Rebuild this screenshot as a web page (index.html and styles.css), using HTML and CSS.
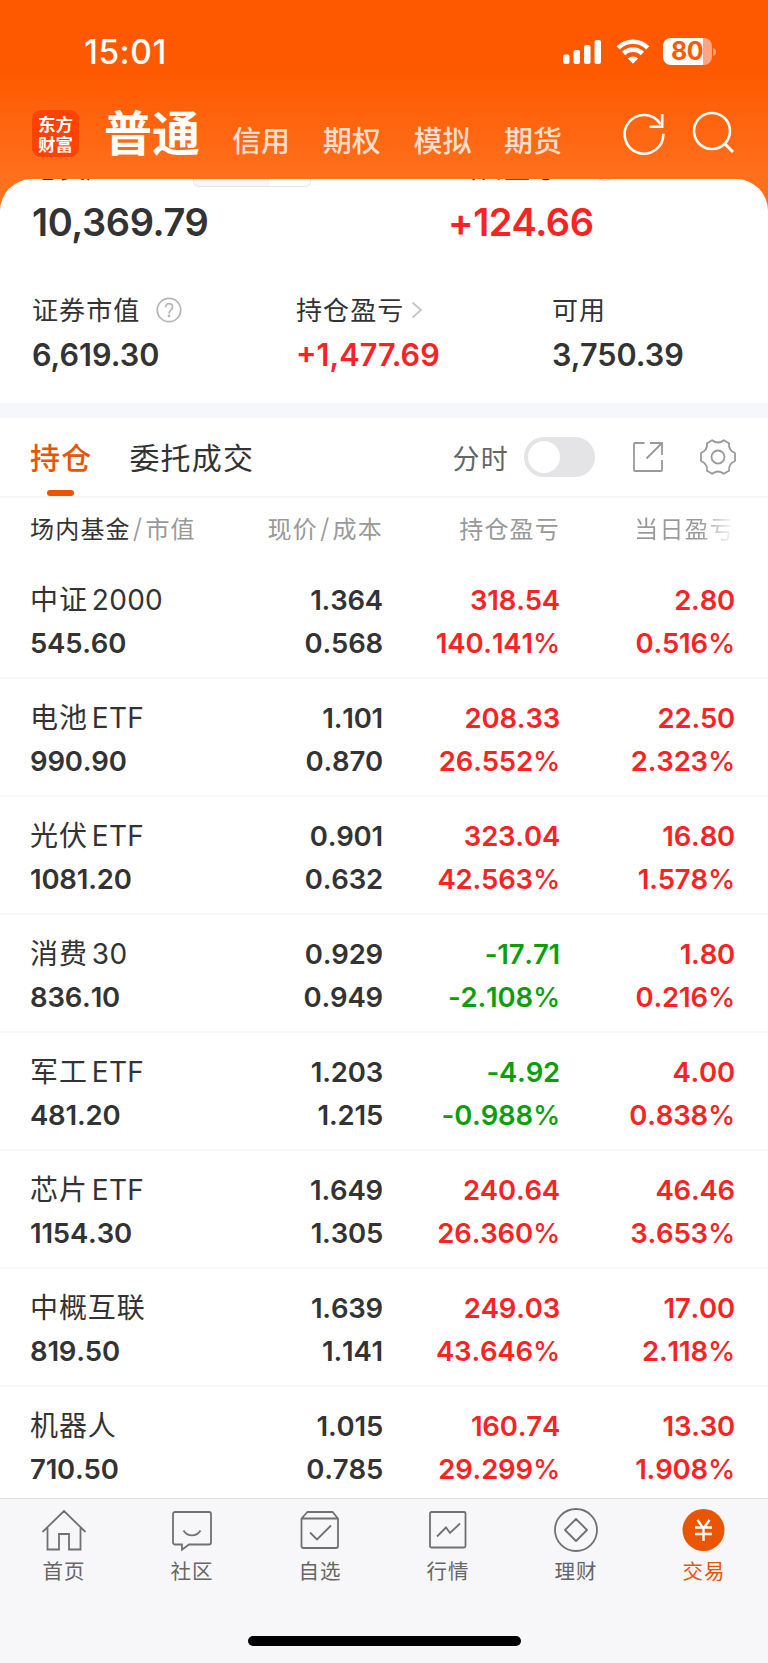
FILE: index.html
```html
<!DOCTYPE html>
<html lang="zh-CN">
<head>
<meta charset="utf-8">
<title>普通交易</title>
<link rel="stylesheet" href="styles.css">
</head>
<body>
<div class="app">
  <header class="top">
    <div class="status">
      <span class="clock">15:01</span>
      <svg class="signal" width="40" height="26" viewBox="0 0 40 26" fill="#fff"><rect x="0" y="15.500" width="6.500" height="9.500" rx="2"/><rect x="10.500" y="11" width="6.500" height="14" rx="2"/><rect x="21" y="6" width="6.500" height="19" rx="2"/><rect x="31.500" y="1" width="6.500" height="24" rx="2"/></svg>
      <svg class="wifi" width="34" height="26" viewBox="0 0 34 26"><g fill="none" stroke="#fff" stroke-width="4.600"><path d="M2.200 8.800a21 21 0 0 1 29.600 0"/><path d="M7.600 14.500a13.300 13.300 0 0 1 18.800 0"/></g><path d="M17 24.700l-5.100-5.200a7.300 7.300 0 0 1 10.200 0z" fill="#fff"/></svg>
      <span class="battery">80</span>
      <svg class="nub" width="4" height="10" viewBox="0 0 4 10"><path d="M0 1c4 1 4 7 0 8z" fill="#ffa680"/></svg>
    </div>
    <nav class="accounts">
      <span class="logo"><span>东方</span><span>财富</span></span>
      <b class="current">普通</b>
      <span class="acct">信用</span><span class="acct">期权</span><span class="acct">模拟</span><span class="acct">期货</span>
      <svg class="refresh" width="44" height="44" viewBox="0 0 44 44" fill="none" stroke="#fff" stroke-width="2.600"><path d="M41.300 22.700A19.300 19.300 0 1 1 38.500 13.300"/><path d="M40.200 3v12.700H27.500"/></svg>
      <svg class="search" width="44" height="44" viewBox="0 0 44 44" fill="none" stroke="#fff" stroke-width="2.600"><circle cx="20" cy="20" r="18"/><path d="M32.500 32.500L41 41" stroke-width="3"/></svg>
    </nav>
  </header>
  <main class="sheet">
    <div class="peek"><span class="peek-l">总资产</span><span class="peek-seg"><i></i></span><span class="peek-r">当日盈亏</span><span class="peek-help"></span></div>
    <section class="totals"><span>10,369.79</span><span class="up">+124.66</span></section>
    <section class="stats">
      <div><p>证券市值<svg class="help" width="26" height="26" viewBox="0 0 26 26" fill="none" stroke="#b4b4b4" stroke-width="1.700"><circle cx="13" cy="13" r="11.700"/><path d="M9.500 10.200c0-4.700 7-4.700 7 0 0 2.800-3.500 2.900-3.500 6.200"/><circle cx="13" cy="19" r=".6"/></svg></p><b>6,619.30</b></div>
      <div><p>持仓盈亏<svg class="more" width="12" height="18" viewBox="0 0 12 18" fill="none" stroke="#c4c4c4" stroke-width="1.800"><path d="M1.500 1.500L10 9l-8.500 7.500"/></svg></p><b class="up">+1,477.69</b></div>
      <div><p>可用</p><b>3,750.39</b></div>
    </section>
    <section class="tabs">
      <span class="tab on">持仓</span><span class="tab">委托成交</span>
      <span class="minute">分时</span><span class="toggle"></span>
      <svg class="share" width="32" height="32" viewBox="0 0 32 32" fill="none" stroke="#999" stroke-width="1.800"><path d="M12.500 2H3a1 1 0 0 0-1 1v26a1 1 0 0 0 1 1h26a1 1 0 0 0 1-1V19M18 2h12v12M30 2L14.500 17.500"/></svg>
      <svg class="gear" width="38" height="38" viewBox="0 0 38 38" fill="none" stroke="#999" stroke-width="1.800" stroke-linejoin="round"><circle cx="19" cy="19" r="6.500"/><path d="M13.200 2.200Q19 6.800 24.800 2.200L30 5.200Q29.300 12.300 36 15v8Q29.300 25.700 30 32.800L24.800 35.800Q19 31.200 13.200 35.800L8 32.800Q8.700 25.700 2 23v-8Q8.700 12.300 8 5.200z"/></svg>
    </section>
    <section class="head"><span><em>场内基金</em><i>/</i>市值</span><span>现价<i>/</i>成本</span><span>持仓盈亏</span><span class="fade">当日盈亏</span></section>
    <section class="rows">
      <div class="row"><div><span class="name">中证<i>2000</i></span><b>545.60</b></div><div><b>1.364</b><b>0.568</b></div><div class="up"><b>318.54</b><b>140.141<u>%</u></b></div><div class="up"><b>2.80</b><b>0.516<u>%</u></b></div></div>
      <div class="row"><div><span class="name">电池<i>ETF</i></span><b>990.90</b></div><div><b>1.101</b><b>0.870</b></div><div class="up"><b>208.33</b><b>26.552<u>%</u></b></div><div class="up"><b>22.50</b><b>2.323<u>%</u></b></div></div>
      <div class="row"><div><span class="name">光伏<i>ETF</i></span><b>1081.20</b></div><div><b>0.901</b><b>0.632</b></div><div class="up"><b>323.04</b><b>42.563<u>%</u></b></div><div class="up"><b>16.80</b><b>1.578<u>%</u></b></div></div>
      <div class="row"><div><span class="name">消费<i>30</i></span><b>836.10</b></div><div><b>0.929</b><b>0.949</b></div><div class="down"><b>-17.71</b><b>-2.108<u>%</u></b></div><div class="up"><b>1.80</b><b>0.216<u>%</u></b></div></div>
      <div class="row"><div><span class="name">军工<i>ETF</i></span><b>481.20</b></div><div><b>1.203</b><b>1.215</b></div><div class="down"><b>-4.92</b><b>-0.988<u>%</u></b></div><div class="up"><b>4.00</b><b>0.838<u>%</u></b></div></div>
      <div class="row"><div><span class="name">芯片<i>ETF</i></span><b>1154.30</b></div><div><b>1.649</b><b>1.305</b></div><div class="up"><b>240.64</b><b>26.360<u>%</u></b></div><div class="up"><b>46.46</b><b>3.653<u>%</u></b></div></div>
      <div class="row"><div><span class="name">中概互联</span><b>819.50</b></div><div><b>1.639</b><b>1.141</b></div><div class="up"><b>249.03</b><b>43.646<u>%</u></b></div><div class="up"><b>17.00</b><b>2.118<u>%</u></b></div></div>
      <div class="row"><div><span class="name">机器人</span><b>710.50</b></div><div><b>1.015</b><b>0.785</b></div><div class="up"><b>160.74</b><b>29.299<u>%</u></b></div><div class="up"><b>13.30</b><b>1.908<u>%</u></b></div></div>
    </section>
  </main>
  <footer class="bottom">
    <nav class="menu">
      <span><svg width="48" height="48" viewBox="0 0 48 48"><path d="M2.500 26L24 5l21.500 21M7.500 22v21.500h11.500V28h10v15.500h11.500V22"/></svg>首页</span>
      <span><svg width="48" height="48" viewBox="0 0 48 48"><path d="M7 6h34a2 2 0 0 1 2 2v28.500a2 2 0 0 1-2 2H21l-7 5.200v-5.200H7a2 2 0 0 1-2-2V8a2 2 0 0 1 2-2zM15.500 24.500c4 6.500 13 6.500 17 0"/></svg>社区</span>
      <span><svg width="48" height="48" viewBox="0 0 48 48"><path d="M5.500 12.500v27.500a2 2 0 0 0 2 2h32.500a2 2 0 0 0 2-2V12.500L36.500 6h-25zM5.500 12.500h36.500M14 26.500l7 7L35 19.500"/></svg>自选</span>
      <span><svg width="48" height="48" viewBox="0 0 48 48"><rect x="6" y="6" width="35.500" height="35.500" rx="1.500"/><path d="M13 30.500l9-9 4 5.500 10-9.500"/></svg>行情</span>
      <span><svg width="48" height="48" viewBox="0 0 48 48"><circle cx="24" cy="24" r="21"/><path d="M24 13l11 11-11 11-11-11z" stroke-linejoin="round"/></svg>理财</span>
      <span class="active"><svg width="48" height="48" viewBox="0 0 48 48"><circle class="disc" cx="23.500" cy="24" r="21"/><path class="yen" d="M17.500 14l6 8.500L29.500 14M23.500 22.500V35M15 21.500h17M15 28h17"/></svg>交易</span>
    </nav>
    <div class="home-bar"></div>
  </footer>
</div>
</body>
</html>
```

FILE: styles.css
```css
* { box-sizing: border-box; }
body { margin: 0; background: #fff; }
p { margin: 0; }
i, em { font-style: normal; }
svg { flex: none; display: block; }
.app { width: 768px; height: 1663px; overflow: hidden; display: flex; flex-direction: column; color: #333; font-family: Inter, "Noto Sans CJK SC", sans-serif; background: linear-gradient(#ff5900 0, #ff5900 70px, #ff701d 179px, #ff701d 240px, #fff 241px); }
.top { height: 179px; flex: none; color: #fff; }
.status { height: 98px; padding: 5px 51px 0 84px; display: flex; align-items: center; }
.clock { font-size: 33.500px; font-weight: 500; letter-spacing: .5px; }
.signal { margin-left: auto; }
.wifi { margin-left: 13px; }
.battery { width: 49px; height: 27px; margin-left: 13px; padding-left: 8px; border-radius: 8px; background: linear-gradient(90deg, #fff 40px, #ffa680 40px); line-height: 27px; font-size: 25px; font-weight: 700; color: #ff5900; letter-spacing: -.4px; }
.nub { margin-left: 1px; }
.accounts { height: 81px; padding-left: 32px; display: flex; align-items: flex-start; white-space: nowrap; }
.logo { width: 47px; height: 47px; margin-top: 12px; border-radius: 9px; background: #ff4200; display: flex; flex-direction: column; align-items: center; justify-content: center; font: 700 17.500px/20px "Noto Sans CJK SC", sans-serif; }
.current { margin: 1px 0 0 25px; font-size: 48px; line-height: 70px; width: 97px; }
.acct { margin: 22px 0 0 31px; font-size: 29px; line-height: 44px; width: 59.700px; font-weight: 500; color: #ffdecd; }
.refresh { margin: 13px 0 0 58px; }
.search { margin: 13px 0 0 26px; }
.sheet { height: 1319px; flex: none; background: #fff; border-radius: 32px 32px 0 0; overflow: hidden; }
.peek { height: 17px; display: flex; align-items: flex-start; overflow: hidden; font-size: 26px; line-height: 30px; }
.peek-l { margin: -25px 0 0 34px; width: 159px; }
.peek-r { margin: -25px 0 0 141px; }
.peek-help { width: 26px; height: 26px; margin: -24px 0 0 36px; border: 1px solid #d8d8d8; border-radius: 50%; }
.peek-seg { width: 118px; height: 8px; border: 1px solid #e6e6e8; border-top: 0; border-radius: 0 0 6px 6px; overflow: hidden; }
.peek-seg i { display: block; width: 75px; height: 8px; background: #f7f7f9; }
.totals { height: 88px; padding: 3px 32px 0; display: grid; grid-template-columns: 416px 1fr; font-size: 38px; font-weight: 600; line-height: 46px; letter-spacing: -.4px; }
.stats { height: 119px; padding: 6px 32px 0; display: grid; grid-template-columns: 264px 256px 1fr; font-size: 26px; }
.stats p { height: 36px; display: flex; align-items: center; letter-spacing: 1.100px; }
.stats b { display: block; font-size: 30.600px; line-height: 36px; margin-top: 11px; font-weight: 600; }
.help { margin: 3px 0 0 16px; }
.more { margin: 3px 0 0 7px; }
.up { color: #fa2323; }
.down { color: #0a9f0a; }
.tabs { height: 95px; border-top: 15px solid #f6f7fa; border-bottom: 2px solid #f6f6f7; padding: 0 31px 0 30px; display: flex; align-items: center; font-size: 30px; letter-spacing: 1.200px; }
.tab { position: relative; top: -1px; margin-right: 37px; }
.tab.on { color: #ea5504; font-weight: 500; }
.tab.on::after { content: ""; position: absolute; left: 17px; bottom: -18px; width: 27px; height: 6px; border-radius: 3px; background: #ea5504; }
.minute { margin-left: auto; font-size: 27px; color: #666; }
.toggle { width: 71px; height: 40px; border-radius: 20px; background: #e4e4e6; margin-left: 15px; padding: 4px; }
.toggle::before { content: ""; display: block; width: 32px; height: 32px; border-radius: 50%; background: #fff; }
.share { margin-left: 37px; }
.gear { margin-left: 35px; }
.head, .row { display: grid; grid-template-columns: 200px 153px 177px 175px; padding-left: 30px; text-align: right; }
.head { height: 63px; line-height: 64px; font-size: 24px; letter-spacing: 1.200px; color: #999; }
.head em { color: #333; }
.head i { font-size: 27px; line-height: 1; margin: 0 2px; font-weight: 300; }
.head > :first-child, .row > :first-child { text-align: left; }
.fade { background: linear-gradient(90deg, #999 80%, #fff); -webkit-background-clip: text; background-clip: text; color: transparent; }
.row { height: 118px; padding-top: 18px; border-bottom: 2px solid #f7f7f8; line-height: 43px; font-size: 28px; }
.row b, .name { display: block; height: 43px; }
.row b { font-size: 27.500px; line-height: 42px; font-weight: 600; font-kerning: none; letter-spacing: -.2px; }
.row u { text-decoration: none; font-weight: 500; }
.name { letter-spacing: .9px; }
.name i { margin-left: 4px; letter-spacing: .3px; }
.bottom { flex: none; height: 165px; border-top: 1px solid #dedee1; background: #f7f7fa; }
.menu { display: grid; grid-template-columns: repeat(6, 128px); height: 137px; padding-top: 7px; }
.menu span { display: flex; flex-direction: column; align-items: center; color: #666; font-size: 20.500px; line-height: 36px; letter-spacing: 1px; }
.menu svg { fill: none; stroke: #707070; stroke-width: 1.800; }
.menu .active { color: #ea5504; }
.menu .disc { fill: #ea5504; stroke: none; }
.menu .yen { stroke: #fff; stroke-width: 2.400; }
.home-bar { width: 273px; height: 10px; border-radius: 5px; background: #000; margin: 0 auto; }
```
